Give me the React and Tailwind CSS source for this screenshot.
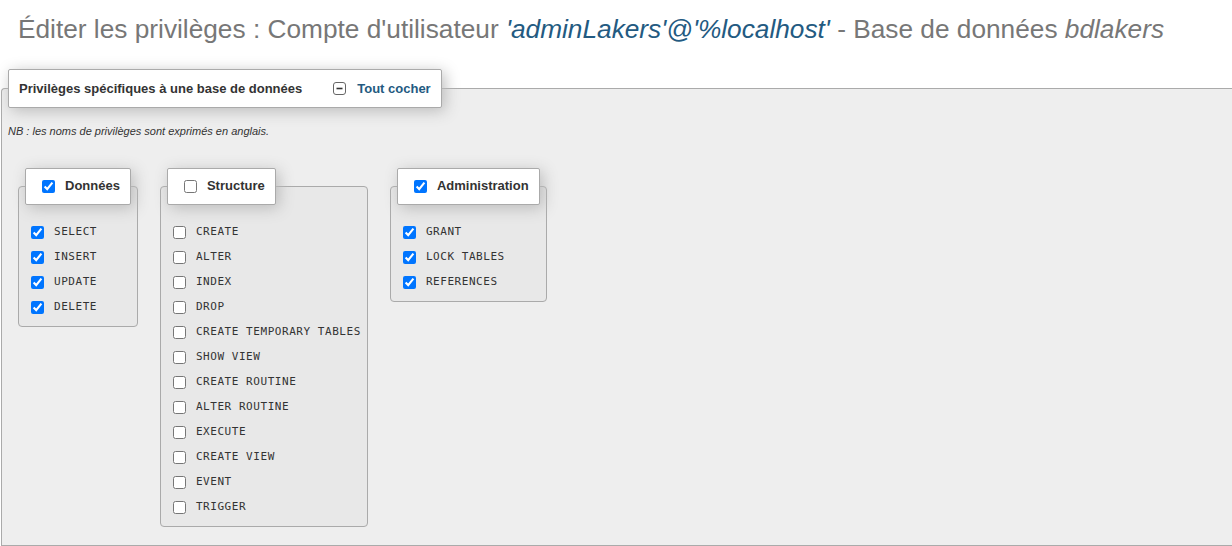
import { useState } from 'react';

const GROUPS = [
  {
    name: 'Données',
    items: ['SELECT', 'INSERT', 'UPDATE', 'DELETE'],
    checked: true,
  },
  {
    name: 'Structure',
    items: [
      'CREATE', 'ALTER', 'INDEX', 'DROP', 'CREATE TEMPORARY TABLES', 'SHOW VIEW',
      'CREATE ROUTINE', 'ALTER ROUTINE', 'EXECUTE', 'CREATE VIEW', 'EVENT', 'TRIGGER',
    ],
    checked: false,
  },
  {
    name: 'Administration',
    items: ['GRANT', 'LOCK TABLES', 'REFERENCES'],
    checked: true,
  },
];

function PrivGroup({ group }) {
  const [state, setState] = useState(() =>
    Object.fromEntries(group.items.map(i => [i, group.checked]))
  );
  const all = group.items.every(i => state[i]);

  const toggleAll = () => {
    const v = !all;
    setState(Object.fromEntries(group.items.map(i => [i, v])));
  };

  return (
    <fieldset className="border border-[#aaa] rounded-[4px] bg-[#e8e8e8] px-[6px] pb-[6px]">
      <legend className="flex items-center h-[37px] bg-white border border-[#aaa] rounded-[2px] shadow-[3px_3px_15px_#bbb] pl-[16px] pr-[10px]">
        <input type="checkbox" checked={all} onChange={toggleAll} className="w-[13px] h-[13px]" />
        <span className="ml-[10px] -mt-[1px] font-bold text-[13px] text-[#333]">{group.name}</span>
      </legend>
      <div className="pt-[15px] flex flex-col">
        {group.items.map(item => (
          <label key={item} className="flex items-center h-[25px] pl-[6px]">
            <input
              type="checkbox"
              checked={state[item]}
              onChange={() => setState(s => ({ ...s, [item]: !s[item] }))}
              className="w-[13px] h-[13px]"
            />
            <span className="ml-[10px] font-['DejaVu_Sans_Mono',monospace] text-[11px] tracking-[0.55px] text-[#333] whitespace-nowrap">
              {item}
            </span>
          </label>
        ))}
      </div>
    </fieldset>
  );
}

export default function App() {
  return (
    <div className="bg-white h-[546px] overflow-hidden font-['Liberation_Sans',Arial,sans-serif] text-[#333]">
      <h2 className="pl-[18px] pt-[14px] text-[26.25px] leading-[30px] text-[#777] whitespace-nowrap">
        Éditer les privilèges : Compte d'utilisateur{' '}
        <i className="text-[#235a81]">'adminLakers'@'%localhost'</i> - Base de données <i>bdlakers</i>
      </h2>

      <fieldset className="mt-[25px] ml-[1px] border border-r-0 border-[#aaa] rounded-tl-[4px] bg-[#eee] px-[6px] pb-[18px]">
        <legend className="flex items-center h-[39px] bg-white border border-[#aaa] rounded-[2px] shadow-[3px_3px_15px_#bbb] px-[10px]">
          <span className="font-bold text-[13px] text-[#333]">Privilèges spécifiques à une base de données</span>
          <button className="ml-[31px] flex items-center text-[#235a81] font-bold text-[13px]">
            <svg width="13" height="13" viewBox="0 0 13 13">
              <rect x="0.5" y="0.5" width="12" height="12" rx="2.5" fill="#fff" stroke="#666" />
              <line x1="3.5" y1="6.5" x2="9.5" y2="6.5" stroke="#333" strokeWidth="1.6" />
            </svg>
            <span className="ml-[11px]">Tout cocher</span>
          </button>
        </legend>

        <p className="mt-[16px] italic text-[11px] leading-[14px] text-[#333]">
          NB : les noms de privilèges sont exprimés en anglais.
        </p>

        <div className="mt-[30px] pl-[10px] flex items-start gap-[22px]">
          {GROUPS.map(g => (
            <PrivGroup key={g.name} group={g} />
          ))}
        </div>
      </fieldset>
    </div>
  );
}
